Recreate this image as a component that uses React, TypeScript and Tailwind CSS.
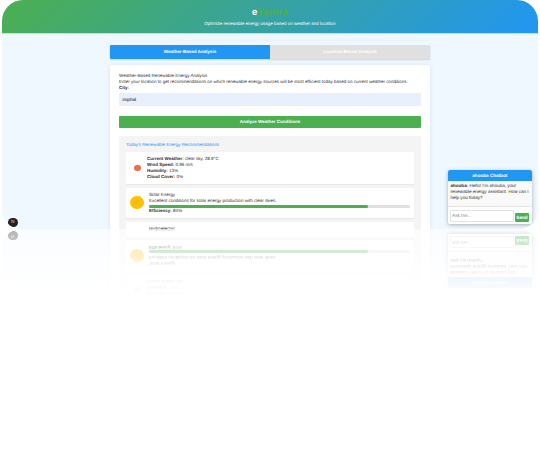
import React from "react";

function Logo() {
  return (
    <div className="text-[9.6px] leading-[12px] font-bold tracking-[0.2px] text-white">
      e<span className="text-[#4caf50]">Yantra</span>
    </div>
  );
}

function Efficiency() {
  return (
    <>
      <div className="mt-[1.5px] h-[2.5px] w-[260.5px] rounded-full bg-[#e0e0e0]">
        <div className="h-full w-[84%] rounded-full bg-[#4caf50]" />
      </div>
      <p className="leading-[6px]"><b>Efficiency:</b> 84%</p>
    </>
  );
}

function Chatbot() {
  return (
    <section className="absolute left-[445.5px] top-[170px] flex h-[54px] w-[84.5px] flex-col overflow-hidden rounded-[2px] bg-white shadow-[0_1px_4px_rgba(0,0,0,0.3)]">
      <h2 className="h-[11px] shrink-0 bg-[#2196f3] text-center text-[4.6px] leading-[11px] font-bold text-white">ahouba Chatbot</h2>
      <p className="h-[26px] shrink-0 border-b border-[#e5e5e5] bg-[#f9f9f9] px-[3px] pt-[2px] text-[4.55px] leading-[6px] whitespace-nowrap">
        <b>ahouba:</b> Hello! I'm ahouba, your<br />renewable energy assistant. How can I<br />help you today?
      </p>
      <div className="flex items-end gap-[1.5px] px-[2.5px] pt-[2.5px]">
        <div className="h-[12.5px] w-[63.5px] rounded-[1px] border border-[#e2e2e2] px-[1px] text-[4.7px] leading-[10px] text-[#858585]">Ask me...</div>
        <div className="h-[9px] w-[14px] rounded-[1px] bg-[#4caf50] text-center text-[4.7px] leading-[9px] font-bold text-white">Send</div>
      </div>
    </section>
  );
}

function Screen() {
  return (
    <div className="relative h-[229px] w-[536px] overflow-hidden rounded-t-[21px] rounded-b-[19px] bg-[#f0f8ff] font-['Liberation_Sans',Arial,sans-serif] text-[4.5px] leading-[6px] text-[#2d2d2d] [text-rendering:geometricPrecision]">
      <header className="h-[33px] bg-[linear-gradient(135deg,#4caf50,#2196f3)] pt-[6.5px] text-center text-white shadow-[0_1px_1px_rgba(0,0,0,0.12)]">
        <Logo />
        <p className="mt-[2.5px] text-[4.53px] leading-[6px]">Optimize renewable energy usage based on weather and location</p>
      </header>
      <main className="mx-auto w-[320px]">
        <div className="mt-[8px] h-[18px] pt-[4px] shadow-[0_0_2px_rgba(100,150,200,0.12)]">
          <div className="grid h-[14px] grid-cols-2 overflow-hidden rounded-[1px] text-center leading-[14px] font-bold text-white shadow-[0_1px_2px_rgba(0,0,0,0.12)]">
            <div className="bg-[#2196f3]">Weather-Based Analysis</div>
            <div className="bg-[#e0e0e0]">Location-Based Analysis</div>
          </div>
        </div>
        <section className="mt-[6px] h-[180px] rounded-[2px] bg-white px-[9px] pt-[8px] shadow-[0_0_4px_rgba(0,40,80,0.1)]">
          <p>Weather-Based Renewable Energy Analysis</p>
          <p className="whitespace-nowrap">Enter your location to get recommendations on which renewable energy sources will be most efficient today based on current weather conditions.</p>
          <p className="font-bold">City:</p>
          <div className="mt-[2px] h-[13px] rounded-[1px] bg-[#e8f0fe] px-[3.5px] pt-[1px] text-[4.6px] leading-[12px] text-black">imphal</div>
          <div className="mt-[10px] h-[12px] rounded-[1px] bg-[#4caf50] text-center leading-[12px] font-bold text-white">Analyze Weather Conditions</div>
          <div className="mt-[8px] h-[110px] rounded-[2px] bg-[#f4f4f4] px-[7px] pt-[6px]">
            <h2 className="leading-[6px] text-[#2196f3]">Today's Renewable Energy Recommendations</h2>
            <article className="mt-[4px] flex h-[32px] items-center rounded-[1px] bg-white pl-[7.5px] shadow-[0_0.5px_1px_rgba(0,0,0,0.06)]">
              <span className="h-[6.5px] w-[7.5px] rounded-full bg-[#ec6e4c]" />
              <div className="ml-[6px]">
                <p><b>Current Weather:</b> clear sky, 28.9°C</p>
                <p><b>Wind Speed:</b> 0.96 m/s</p>
                <p><b>Humidity:</b> 13%</p>
                <p><b>Cloud Cover:</b> 0%</p>
              </div>
            </article>
            <article className="mt-[3.5px] flex h-[30.5px] rounded-[1px] bg-white pl-[4px] shadow-[0_0.5px_1px_rgba(0,0,0,0.06)]">
              <span className="mt-[8.5px] flex h-[13px] w-[14px] items-center justify-center rounded-full bg-[#ffc107]">
                <span className="h-[5px] w-[5px] rounded-full bg-[#fab90a]" />
              </span>
              <div className="ml-[5px] pt-[4px]">
                <p>Solar Energy</p>
                <p>Excellent conditions for solar energy production with clear skies.</p>
                <Efficiency />
              </div>
            </article>
            <article className="mt-[4px] h-[20px] rounded-[1px] bg-white pt-[3.5px] pl-[23px]">
              <p>Hydroelectric</p>
            </article>
          </div>
        </section>
      </main>
      <Chatbot />
      <div className="absolute left-[5.5px] top-[217.5px] h-[9.5px] w-[10.5px] rounded-full bg-[#222] text-center text-[4.8px] leading-[9.5px] text-[#ddd]">N</div>
    </div>
  );
}

export default function App() {
  return (
    <div className="h-[460px] w-[540px] overflow-hidden bg-white pl-[2px]">
      <Screen />
      <div aria-hidden="true" className="w-[536px] -scale-y-100 [mask-image:linear-gradient(to_top,rgba(0,0,0,0.34)_0px,rgba(0,0,0,0.24)_25px,rgba(0,0,0,0.1)_43px,rgba(0,0,0,0.03)_60px,transparent_76px)]">
        <Screen />
      </div>
    </div>
  );
}
